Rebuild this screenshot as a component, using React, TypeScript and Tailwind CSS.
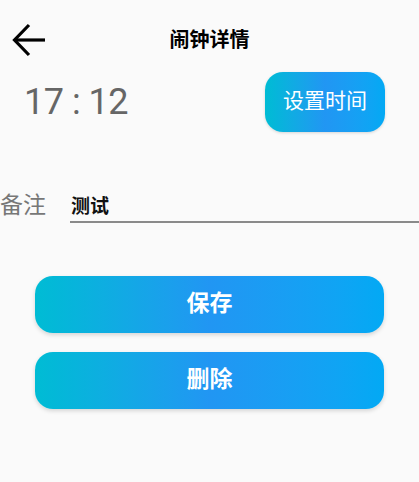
export default function App() {
  const font = { fontFamily: 'Roboto, "Noto Sans CJK SC", sans-serif' };

  return (
    <div style={font} className="w-[419px] h-[482px] bg-[#fafafa] flex flex-col">
      {/* header */}
      <div className="h-[72px] pt-[8px] grid grid-cols-[70px_1fr_70px] items-center">
        <div className="pl-[12px] flex items-center">
          <svg width="34" height="34" viewBox="0 0 34 34" fill="none" stroke="#000" strokeWidth="3.2">
            <path d="M33 17H4" />
            <path d="M17 2L2.5 17L17 32" />
          </svg>
        </div>
        <p className="text-center text-[20px] font-bold text-black">闹钟详情</p>
        <div />
      </div>

      {/* time row */}
      <div className="h-[60px] flex items-center justify-between pl-[24px] pr-[34px]">
        <p className="text-[36px] text-[#666] tracking-[-0.5px]">17 : 12</p>
        <button className="w-[120px] h-[60px] rounded-[18px] bg-gradient-to-r from-[#00bcd4] via-[#2196f3] to-[#03a9f4] text-white text-[21px] shadow-[0_1px_3px_rgba(0,0,0,0.15)]">
          设置时间
        </button>
      </div>

      {/* note row */}
      <div className="mt-[57px] flex items-end">
        <p className="w-[70px] text-[23px] text-[#777] leading-[30px] pb-[2px]">备注</p>
        <div className="flex-1 h-[34px] border-b-[2px] border-[#8a8a8a] flex items-center pt-[5px]">
          <p className="text-[19px] font-bold text-[#111] pl-[1px]">测试</p>
        </div>
      </div>

      {/* actions */}
      <div className="mt-[53px] px-[35px] flex flex-col gap-[19px]">
        <button className="h-[57px] rounded-[18px] bg-gradient-to-r from-[#00bcd4] via-[#2196f3] to-[#03a9f4] text-white text-[23px] font-bold shadow-[0_2px_4px_rgba(0,0,0,0.15)]">
          保存
        </button>
        <button className="h-[57px] rounded-[18px] bg-gradient-to-r from-[#00bcd4] via-[#2196f3] to-[#03a9f4] text-white text-[23px] font-bold shadow-[0_2px_4px_rgba(0,0,0,0.15)]">
          删除
        </button>
      </div>
    </div>
  );
}
